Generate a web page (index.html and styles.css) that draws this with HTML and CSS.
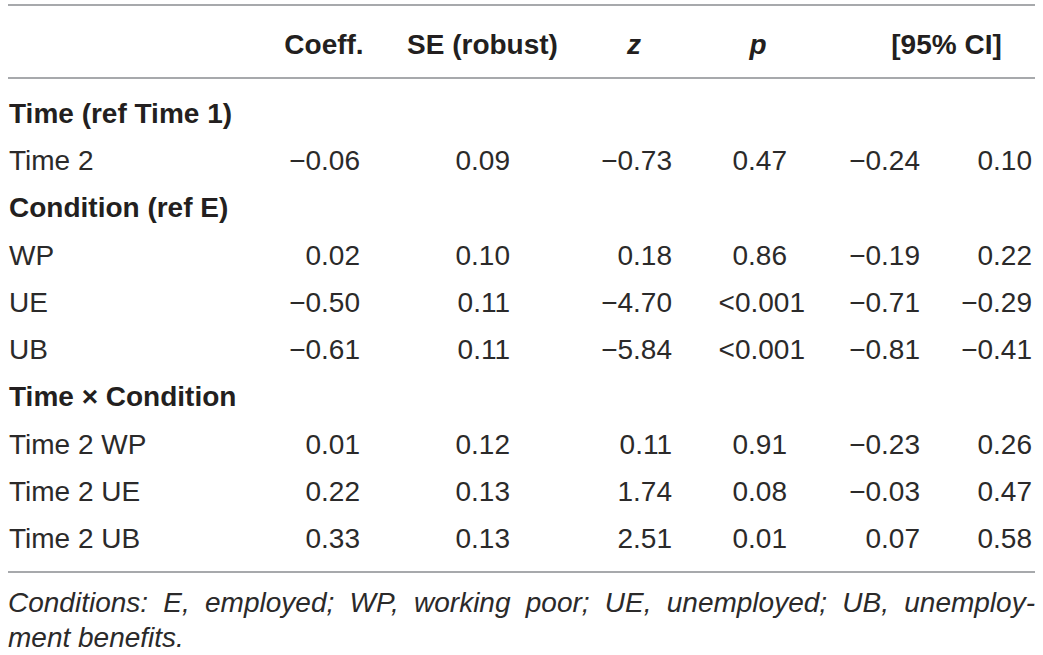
FILE: index.html
```html
<!DOCTYPE html>
<html lang="en">
  <head>
    <meta charset="UTF-8" />
    <meta name="viewport" content="width=device-width, initial-scale=1.0" />
    <title>Table</title>
    <link rel="stylesheet" href="styles.css">
  </head>
  <body>
    <table class="tabel">
      <colgroup>
        <col class="c-label" />
        <col class="c-coef" />
        <col class="c-se" />
        <col class="c-z" />
        <col class="c-p" />
        <col class="c-lo" />
        <col class="c-hi" />
      </colgroup>
      <thead>
        <tr>
          <th></th>
          <th>Coeff.</th>
          <th>SE (robust)</th>
          <th><i>z</i></th>
          <th><i>p</i></th>
          <th colspan="2" class="ci">[95% CI]</th>
        </tr>
      </thead>
      <tbody>
        <tr class="gruppe forste">
          <td colspan="7">Time (ref Time 1)</td>
        </tr>
        <tr>
          <td>Time 2</td>
          <td>−0.06</td>
          <td>0.09</td>
          <td>−0.73</td>
          <td class="kort">0.47</td>
          <td>−0.24</td>
          <td>0.10</td>
        </tr>
        <tr class="gruppe">
          <td colspan="7">Condition (ref E)</td>
        </tr>
        <tr>
          <td>WP</td>
          <td>0.02</td>
          <td>0.10</td>
          <td>0.18</td>
          <td class="kort">0.86</td>
          <td>−0.19</td>
          <td>0.22</td>
        </tr>
        <tr>
          <td>UE</td>
          <td>−0.50</td>
          <td>0.11</td>
          <td>−4.70</td>
          <td>&lt;0.001</td>
          <td>−0.71</td>
          <td>−0.29</td>
        </tr>
        <tr>
          <td>UB</td>
          <td>−0.61</td>
          <td>0.11</td>
          <td>−5.84</td>
          <td>&lt;0.001</td>
          <td>−0.81</td>
          <td>−0.41</td>
        </tr>
        <tr class="gruppe">
          <td colspan="7">Time × Condition</td>
        </tr>
        <tr>
          <td>Time 2 WP</td>
          <td>0.01</td>
          <td>0.12</td>
          <td>0.11</td>
          <td class="kort">0.91</td>
          <td>−0.23</td>
          <td>0.26</td>
        </tr>
        <tr>
          <td>Time 2 UE</td>
          <td>0.22</td>
          <td>0.13</td>
          <td>1.74</td>
          <td class="kort">0.08</td>
          <td>−0.03</td>
          <td>0.47</td>
        </tr>
        <tr class="sidste">
          <td>Time 2 UB</td>
          <td>0.33</td>
          <td>0.13</td>
          <td>2.51</td>
          <td class="kort">0.01</td>
          <td>0.07</td>
          <td>0.58</td>
        </tr>
      </tbody>
    </table>
    <p class="note">
      <span class="linje1">Conditions: E, employed; WP, working poor; UE, unemployed; UB, unemploy-</span>
      <span class="linje2">ment benefits.</span>
    </p>
  </body>
</html>
```

FILE: styles.css
```css
* {
  box-sizing: border-box;
}
body {
  margin: 0;
  padding: 4px 8px 0;
  background-color: #fff;
  color: #2b2a2a;
  font-family: "Liberation Sans", Arial, sans-serif;
  font-size: 28px;
}

.tabel {
  width: 1027px;
  border-collapse: collapse;
  table-layout: fixed;
}
.c-label {
  width: 242px;
}
.c-coef {
  width: 148px;
}
.c-se {
  width: 169px;
}
.c-z {
  width: 134px;
}
.c-p {
  width: 114px;
}
.c-lo {
  width: 120px;
}
.c-hi {
  width: 100px;
}

thead tr {
  border-top: 2px solid #a7a9ac;
  border-bottom: 2px solid #a7a9ac;
}
th {
  height: 73px;
  padding: 7px 0 0;
  text-align: center;
  font-weight: bold;
  white-space: nowrap;
  color: #231f20;
}
th.ci {
  padding-left: 43px;
}

td {
  height: 47.3px;
  padding: 0;
  text-align: right;
  white-space: nowrap;
}
td:first-child {
  text-align: left;
  padding-left: 1px;
}
td:nth-child(2) {
  padding-right: 38px;
}
td:nth-child(3) {
  padding-right: 57px;
}
td:nth-child(4) {
  padding-right: 29px;
}
td:nth-child(5) {
  padding-right: 10px;
}
td.kort {
  padding-right: 28px;
}
td:nth-child(6) {
  padding-right: 15px;
}
td:nth-child(7) {
  padding-right: 3px;
}

.gruppe td {
  font-weight: bold;
  color: #231f20;
}
.forste td {
  height: 59.3px;
  padding-top: 12px;
}
.sidste {
  border-bottom: 2px solid #a7a9ac;
}
.sidste td {
  height: 56.3px;
  padding-bottom: 9px;
}

.note {
  margin: 0;
  width: 1027px;
  font-style: italic;
  line-height: 35px;
  padding-top: 12px;
}
.linje1 {
  display: block;
  text-align: justify;
  text-align-last: justify;
}
.linje2 {
  display: block;
}
```
